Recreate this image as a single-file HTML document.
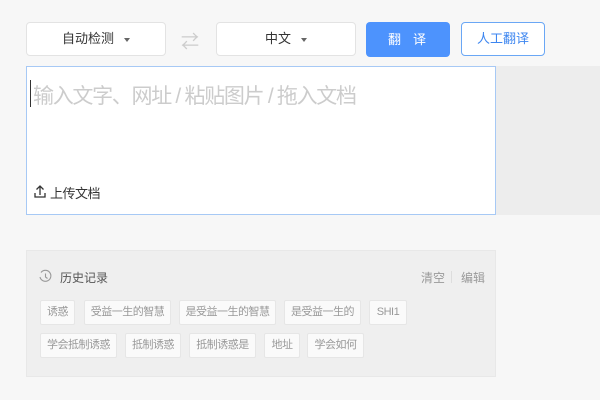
<!DOCTYPE html>
<html><head><meta charset="utf-8"><style>
*{margin:0;padding:0;box-sizing:border-box}
body{width:600px;height:400px;background:#f7f7f7;font-family:"Liberation Sans","Noto Sans CJK SC",sans-serif;position:relative;overflow:hidden}
.a{position:absolute;white-space:nowrap}
.dd{top:22px;height:34px;background:#fff;border:1px solid #e3e3e3;border-radius:4px;font-size:13px;color:#333;text-align:center;line-height:32px}
.dd i{display:inline-block;width:0;height:0;border-left:3px solid transparent;border-right:3px solid transparent;border-top:4px solid #666;margin-left:10px;vertical-align:middle}
.tag{position:absolute;height:25px;background:#fafafa;border:1px solid #e6e6e6;border-radius:2px;font-size:11px;color:#999;line-height:23px;text-align:center;white-space:nowrap;overflow:hidden;letter-spacing:-0.5px}
</style></head><body>
<div class="a dd" style="left:26px;width:140px">自动检测<i></i></div>
<div class="a" style="left:181px;top:28px;color:#ccc;font-size:18px">⇄</div>
<div class="a dd" style="left:216px;width:140px">中文<i></i></div>
<div class="a" style="left:366px;top:22px;width:84px;height:35px;background:#4d93fd;border-radius:4px;color:#fff;font-size:13px;line-height:35px;text-align:center;letter-spacing:12px;padding-left:10px">翻译</div>
<div class="a" style="left:461px;top:22px;width:84px;height:34px;background:#fff;border:1px solid #6aa7f5;border-radius:4px;color:#3d86f0;font-size:13px;line-height:32px;text-align:center">人工翻译</div>
<div class="a" style="left:26px;top:66px;width:470px;height:149px;background:#fff;border:1px solid #a7c9f5"></div>
<div class="a" style="left:496px;top:66px;width:104px;height:149px;background:#ededed"></div>
<div class="a" style="left:30px;top:80px;width:1px;height:27px;background:#333"></div>
<div class="a" style="left:33px;top:80px;font-size:21px;color:#ccc;letter-spacing:-1.3px">输入文字、网址 / 粘贴图片 / 拖入文档</div>
<svg class="a" style="left:34px;top:184px" width="12" height="14" viewBox="0 0 12 14"><path d="M6 11V2M2.5 5.5L6 2l3.5 3.5M1 9v4h10V9" stroke="#333" stroke-width="1.3" fill="none"/></svg>
<div class="a" style="left:50px;top:183px;font-size:13px;color:#333;letter-spacing:-0.5px">上传文档</div>
<div class="a" style="left:26px;top:250px;width:470px;height:127px;background:#efefef;border:1px solid #e8e8e8"></div>
<svg class="a" style="left:38px;top:269px" width="15" height="15" viewBox="0 0 15 15"><path d="M3 3.5A5.5 5.5 0 1 1 2 8" stroke="#999" stroke-width="1.1" fill="none"/><path d="M7.5 4.5v3.5l2 1.5" stroke="#999" stroke-width="1.1" fill="none"/></svg>
<div class="a" style="left:60px;top:269px;font-size:12px;color:#555">历史记录</div>
<div class="a" style="left:421px;top:269px;font-size:12px;color:#999">清空</div>
<div class="a" style="left:451px;top:271px;width:1px;height:12px;background:#ddd"></div>
<div class="a" style="left:461px;top:269px;font-size:12px;color:#999">编辑</div>
<div class="tag" style="left:40px;top:300px;width:35px">诱惑</div>
<div class="tag" style="left:84px;top:300px;width:87px">受益一生的智慧</div>
<div class="tag" style="left:179px;top:300px;width:97px">是受益一生的智慧</div>
<div class="tag" style="left:284px;top:300px;width:77px">是受益一生的</div>
<div class="tag" style="left:369px;top:300px;width:38px">SHI1</div>
<div class="tag" style="left:40px;top:333px;width:77px">学会抵制诱惑</div>
<div class="tag" style="left:125px;top:333px;width:56px">抵制诱惑</div>
<div class="tag" style="left:189px;top:333px;width:67px">抵制诱惑是</div>
<div class="tag" style="left:264px;top:333px;width:36px">地址</div>
<div class="tag" style="left:307px;top:333px;width:57px">学会如何</div>
</body></html>
